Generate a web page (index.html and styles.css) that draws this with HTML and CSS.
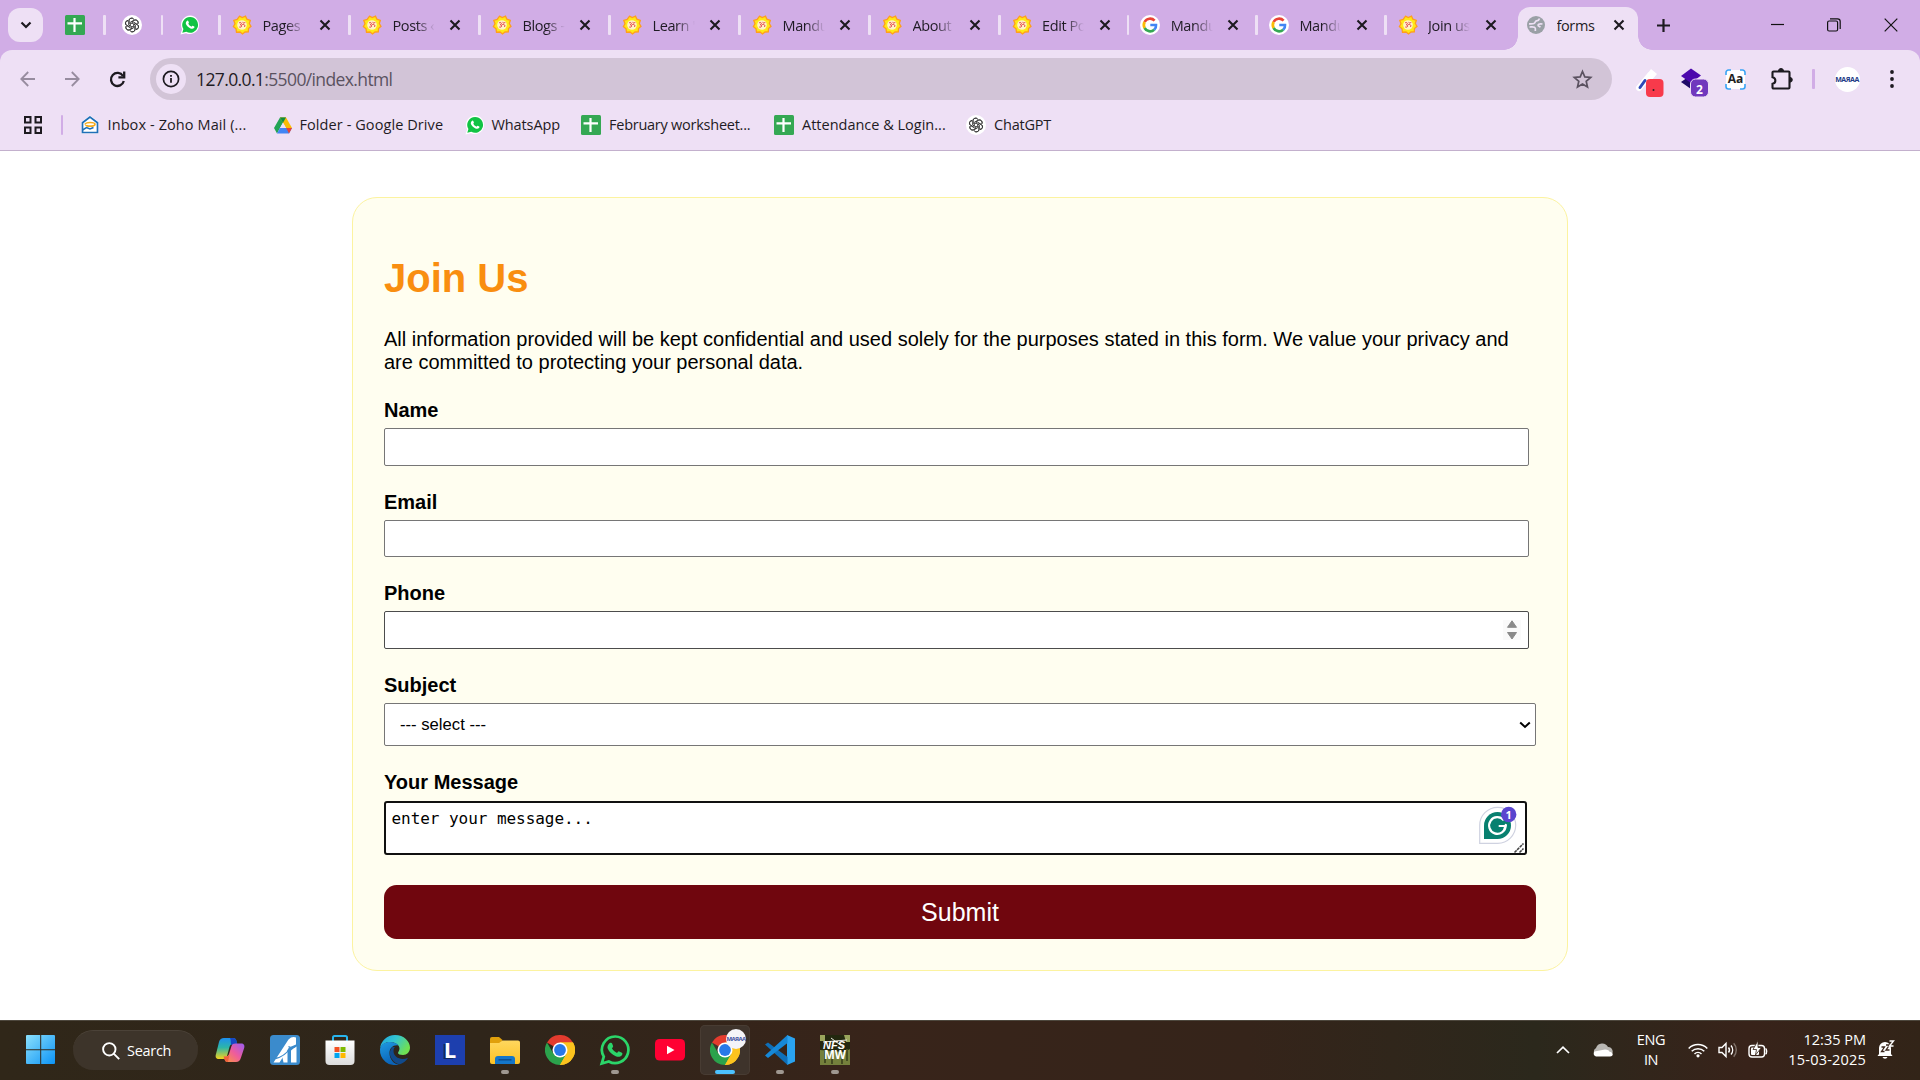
FILE: index.html
```html
<!DOCTYPE html>
<html lang="en">
<head>
<meta charset="utf-8">
<title>forms</title>
<link rel="stylesheet" href="styles.css">
</head>
<body>
<svg class="defs" width="0" height="0">
  <defs>
    <linearGradient id="edge-a" x1="0" y1="0" x2="1" y2="0.5"><stop offset="0" stop-color="#1ba4e0"/><stop offset=".5" stop-color="#34c5d0"/><stop offset="1" stop-color="#6fe052"/></linearGradient>
    <linearGradient id="edge-b" x1="0" y1="0" x2="0.4" y2="1"><stop offset="0" stop-color="#1f9be2"/><stop offset="1" stop-color="#0a63b8"/></linearGradient>
    <linearGradient id="win" x1="0" y1="0" x2="1" y2="1"><stop offset="0" stop-color="#8be0fc"/><stop offset="1" stop-color="#0c93f5"/></linearGradient>
    <linearGradient id="cop-a" x1="0" y1="0" x2="0" y2="1"><stop offset="0" stop-color="#1d8ff0"/><stop offset=".45" stop-color="#2cb6a8"/><stop offset="1" stop-color="#f5d21b"/></linearGradient>
    <linearGradient id="cop-b" x1="1" y1="0" x2="0" y2="1"><stop offset="0" stop-color="#9a5cf4"/><stop offset=".5" stop-color="#ee5c9c"/><stop offset="1" stop-color="#fb9a3c"/></linearGradient>
    <linearGradient id="fold" x1="0" y1="0" x2="0" y2="1"><stop offset="0" stop-color="#ffd75e"/><stop offset="1" stop-color="#fcc226"/></linearGradient>
    <linearGradient id="bag" x1="0" y1="0" x2="0" y2="1"><stop offset="0" stop-color="#ffffff"/><stop offset="1" stop-color="#dcdcdc"/></linearGradient>
    <symbol id="sheet" viewBox="0 0 20 20"><rect width="20" height="20" rx="1.5" fill="#34a853"/><path d="M9.500 3v14M2.500 8.300h14.500" stroke="#fff" stroke-width="2.200"/></symbol>
    <symbol id="gpt" viewBox="0 0 20 20"><circle cx="10" cy="10" r="10" fill="#fff"/><g fill="none" stroke="#333" stroke-width=".85"><path id="gp" d="M7.200 9V5.600a2.600 2.600 0 0 1 4.900-1.200M8.300 11V7.200l3.800-2.100a2.600 2.600 0 0 1 3.500 3.600"/><use href="#gp" transform="rotate(60 10 10)"/><use href="#gp" transform="rotate(120 10 10)"/><use href="#gp" transform="rotate(180 10 10)"/><use href="#gp" transform="rotate(240 10 10)"/><use href="#gp" transform="rotate(300 10 10)"/></g></symbol>
    <symbol id="wa" viewBox="0 0 20 20"><path d="M10.200.6a9.200 9.200 0 0 0-8.100 13.600L.5 19.600l5.600-1.400A9.200 9.200 0 1 0 10.200.6z" fill="#fff"/><path d="M10.200 2a7.900 7.900 0 0 0-6.800 12L2.300 17.800l4-1A7.900 7.900 0 1 0 10.200 2z" fill="#11c344"/><path d="M7.300 5.700c.5-.3.900 0 1.100.5l.5 1.200c.1.400-.5.900-.7 1.200.7 1.500 1.800 2.500 3.300 3.100.4-.4.800-1.100 1.200-1l1.500.8c.5.300.2 1.200-.2 1.600-1 .9-2.300.8-3.500.3-2.200-.9-3.800-2.500-4.600-4.400-.4-1.300.4-2.800 1.400-3.300z" fill="#fff"/></symbol>
    <symbol id="sun" viewBox="0 0 20 20"><path d="M7.500 1.200L10.200 2.500 13.500 1.200 14.900 4.200 18.300 5.300 17.300 8.500 19 11.300 16.500 13.500 16.300 16.900 13 17 10.500 19 8 17 4.500 17.200 4 13.800 1.400 11.500 3 8.700 1.800 5.400 5.200 4.400z" fill="#ffe817" stroke="#ff9f1c" stroke-width="1.300"/><circle cx="10" cy="10" r="4.800" fill="#fff3c4"/><path d="M7 8c2-1.500 3.400.6 1.300 1.800 2.400.4 1.500 3-1 2.200M9.500 10.200c2-2 4.300 0 3 1.700M10.500 7.300c1 1 2 1 2.800-.2" fill="none" stroke="#e2364a" stroke-width="1"/></symbol>
    <symbol id="goog" viewBox="0 0 20 20"><circle cx="10" cy="10" r="10" fill="#fff"/><g fill="none" stroke-width="2.700"><path d="M14.600 5.600A6.200 6.200 0 0 0 4.600 7" stroke="#ea4335"/><path d="M4.600 7a6.300 6.300 0 0 0 0 6" stroke="#fbbc05"/><path d="M4.600 13a6.200 6.200 0 0 0 9.600 1.700" stroke="#34a853"/><path d="M14.200 14.700c1.300-1.200 2-2.900 1.800-4.700h-5.700" stroke="#4285f4"/></g></symbol>
    <symbol id="x" viewBox="0 0 12 12"><path d="M1.500 1.500l9 9M10.500 1.500l-9 9" stroke="#1d1a20" stroke-width="2.100" fill="none"/></symbol>
    <symbol id="chrome" viewBox="0 0 30 30"><path d="M15 15L2 7.500a15 15 0 0 1 26 0z" fill="#e33b2e"/><path d="M15 7.500h13A15 15 0 0 1 15 30z" fill="#fcc31e"/><path d="M2 7.500A15 15 0 0 0 15 30l6.500-11.200L15 15l-6.500 3.700z" fill="#2ba24c"/><path d="M15 30l6.500-11.200a7.500 7.500 0 0 0 0-7.600L15 7.500h13A15 15 0 0 1 15 30z" fill="#fcc31e"/><circle cx="15" cy="15" r="7.500" fill="#fff"/><circle cx="15" cy="15" r="5.900" fill="#2878e8"/></symbol>
  </defs>
</svg>

<header class="browser">
  <div class="tabstrip">
    <button class="tab-search"><svg width="12" height="8" viewBox="0 0 12 8"><path d="M1.500 1.500L6 6l4.500-4.500" fill="none" stroke="#1d1a20" stroke-width="2.200"/></svg></button>
    <div class="pinned first"><svg class="fav"><use href="#sheet"/></svg><i class="sep"></i></div>
    <div class="pinned"><svg class="fav"><use href="#gpt"/></svg><i class="sep"></i></div>
    <div class="pinned"><svg class="fav"><use href="#wa"/></svg><i class="sep"></i></div>
    <div class="tab"><svg class="fav"><use href="#sun"/></svg><span class="label">Pages</span><svg class="close"><use href="#x"/></svg><i class="sep"></i></div>
    <div class="tab"><svg class="fav"><use href="#sun"/></svg><span class="label">Posts ‹</span><svg class="close"><use href="#x"/></svg><i class="sep"></i></div>
    <div class="tab"><svg class="fav"><use href="#sun"/></svg><span class="label">Blogs -</span><svg class="close"><use href="#x"/></svg><i class="sep"></i></div>
    <div class="tab"><svg class="fav"><use href="#sun"/></svg><span class="label">Learn '</span><svg class="close"><use href="#x"/></svg><i class="sep"></i></div>
    <div class="tab"><svg class="fav"><use href="#sun"/></svg><span class="label">Mandu</span><svg class="close"><use href="#x"/></svg><i class="sep"></i></div>
    <div class="tab"><svg class="fav"><use href="#sun"/></svg><span class="label">About</span><svg class="close"><use href="#x"/></svg><i class="sep"></i></div>
    <div class="tab narrow"><svg class="fav"><use href="#sun"/></svg><span class="label">Edit Po</span><svg class="close"><use href="#x"/></svg><i class="sep"></i></div>
    <div class="tab narrow"><svg class="fav"><use href="#goog"/></svg><span class="label">Mandu</span><svg class="close"><use href="#x"/></svg><i class="sep"></i></div>
    <div class="tab narrow"><svg class="fav"><use href="#goog"/></svg><span class="label">Mandu</span><svg class="close"><use href="#x"/></svg><i class="sep"></i></div>
    <div class="tab last"><svg class="fav"><use href="#sun"/></svg><span class="label">Join us</span><svg class="close"><use href="#x"/></svg></div>
    <div class="tab active"><svg class="fav" viewBox="0 0 20 20"><circle cx="10" cy="10" r="9" fill="#9aa0a6"/><path d="M13.500 3.500c-.5 2-1.500 2.200-3 2.300-1.700.2-.8 2.200-2.500 2.700-1.500.5-3 .5-5 .3M3.500 12c2 0 3-.5 5 .3 1.500.7 1 2 .8 3.700M16.500 9c-2-.3-4-.5-4.500 1-.3 1.300 1.500 1.500 2.500 2" fill="none" stroke="#eee0f5" stroke-width="1.700"/></svg><span class="label whole">forms</span><svg class="close"><use href="#x"/></svg></div>
    <svg class="newtab" width="13" height="13"><path d="M6.500 0v13M0 6.500h13" stroke="#1d1a20" stroke-width="2.200"/></svg>
    <div class="window-buttons">
      <svg width="13" height="14"><path d="M0 6.500h13" stroke="#111" stroke-width="1.200"/></svg>
      <svg width="14" height="14" viewBox="0 0 14 14" fill="none" stroke="#111" stroke-width="1.200"><rect x=".6" y="3" width="10" height="10" rx="1.500"/><path d="M3 .8h7.500a2.700 2.700 0 0 1 2.700 2.700v7.500"/></svg>
      <svg width="14" height="14" viewBox="0 0 14 14"><path d="M.7.7l12.600 12.600M13.300.7L.7 13.300" stroke="#111" stroke-width="1.200"/></svg>
    </div>
  </div>

  <div class="toolbar">
    <div class="nav">
      <svg class="faded" width="15" height="16" viewBox="0 0 15 16"><path d="M15 8H1.500M8.200 1L1.300 8l6.900 7"/></svg>
      <svg class="faded" width="15" height="16" viewBox="0 0 15 16"><path d="M0 8h13.500M6.800 1l6.900 7-6.900 7"/></svg>
      <svg class="reload" width="16" height="16" viewBox="0 0 16 16"><path d="M13 5A6.500 6.500 0 1 0 13.800 10"/><path d="M14.200.5v5.800H8.400"/></svg>
    </div>
    <div class="omnibox">
      <span class="info"><svg width="18" height="18" viewBox="0 0 18 18" fill="none" stroke="#1d1a20"><circle cx="9" cy="9" r="7.600" stroke-width="1.700"/><path d="M9 8v4.700M9 4.900v1.800" stroke-width="1.800"/></svg></span>
      <span class="url"><span class="host">127.0.0.1</span>:5500/index.html</span>
      <svg class="star" width="19" height="19" viewBox="0 0 19 19"><path d="M9.500 1.500l2.300 5.400 5.900.5-4.500 3.900 1.300 5.700-5-3-5 3 1.300-5.700L1.300 7.400l5.900-.5z" fill="none" stroke="#5b5260" stroke-width="1.700"/></svg>
    </div>
    <div class="extensions">
      <svg width="28" height="30" viewBox="0 0 28 30"><path d="M2 18L13 5" stroke="#fff" stroke-width="6" stroke-linecap="round"/><path d="M3 17.500l5-7" stroke="#2f49b8" stroke-width="3" stroke-linecap="round"/><path d="M14-1l6 5-6 7-5-5z" fill="#fff"/><rect x="9" y="9" width="17.500" height="18" rx="4" fill="#f83a4b"/><circle cx="16.500" cy="20" r="1" fill="#222"/></svg>
      <svg width="28" height="30" viewBox="0 0 28 30"><path d="M10 5l9 7-9 7-10-7z" fill="#1e0a68"/><path d="M10-1.500l10 7-10 7.500L0 6z" fill="#4c08ad"/><rect x="9.500" y="9" width="18" height="18" rx="5" fill="#7038bd" stroke="#eee0f5"/><text x="18.500" y="23.500" text-anchor="middle" class="count">2</text></svg>
      <svg width="21" height="21" viewBox="0 0 21 21"><rect x="1" y="1" width="19" height="19" rx="3" fill="#fff"/><path d="M1 6V3.500A2.500 2.500 0 0 1 3.500 1H6M15 1h2.500A2.500 2.500 0 0 1 20 3.500V6M20 15v2.500a2.500 2.500 0 0 1-2.500 2.500H15M6 20H3.500A2.500 2.500 0 0 1 1 17.500V15" fill="none" stroke="#38a3f5" stroke-width="1.600"/><text x="10.500" y="14.200" text-anchor="middle" class="aa">Aa</text></svg>
      <svg width="22" height="22" viewBox="0 0 22 22"><path d="M2.500 3.500h15a1 1 0 0 1 1 1v15a1 1 0 0 1-1 1h-15a1 1 0 0 1-1-1v-3.700c3.800-.6 3.800-6 0-6.600V4.500a1 1 0 0 1 1-1z" fill="none" stroke="#1d1a20" stroke-width="2.100"/><path d="M7.500 3a2.500 2.500 0 0 1 5 0zM19 9.500a2.300 2.300 0 0 1 0 4.600z" fill="#1d1a20" stroke="#1d1a20"/></svg>
      <i class="divider"></i>
      <span class="avatar">MAЯAA</span>
      <svg class="menu" width="4" height="18" viewBox="0 0 4 18"><circle cx="2" cy="2" r="1.900"/><circle cx="2" cy="9" r="1.900"/><circle cx="2" cy="16" r="1.900"/></svg>
    </div>
  </div>

  <nav class="bookmarks">
    <svg class="apps" width="18" height="18" viewBox="0 0 18 18" fill="none" stroke="#1d1a20" stroke-width="2"><rect x="1" y="1" width="5.500" height="5.500"/><rect x="11.500" y="1" width="5.500" height="5.500"/><rect x="1" y="11.500" width="5.500" height="5.500"/><rect x="11.500" y="11.500" width="5.500" height="5.500"/></svg>
    <i class="divider"></i>
    <a class="bm zoho"><svg width="18" height="20" viewBox="0 0 18 20"><path d="M9 .5L.5 7v11.500h17V7z" fill="#fff"/><path d="M9 2L1.500 7.700v9.800h15V7.700z" fill="#fff" stroke="#1f70b8" stroke-width="1.700"/><path d="M1.500 15l4-2.500 3.500 1.500 3.500-1.500" fill="none" stroke="#1f70b8" stroke-width="1.500"/><path d="M4 9.500c.5-1.500 3-2 5-2s5 .5 5 1.800c0 1.500-3 2-5 1.900-2 0-4-.3-4-1.200" fill="none" stroke="#f5ab1c" stroke-width="1.700"/></svg><span>Inbox - Zoho Mail (...</span></a>
    <a class="bm drive"><svg width="18" height="17" viewBox="0 0 18 17"><path d="M6 .5h6L6 11 3 16.500 0 11z" fill="#22a455"/><path d="M6 .5h6L18 11h-6z" fill="#fbbc04"/><path d="M6 11h12l-3 5.500H3z" fill="#4285f4"/><path d="M12.200 11H18l-3 5.500z" fill="#ea4335"/><path d="M9 5.600L12 11H6z" fill="#eee0f5"/><path d="M6 .5h6L9 5.700z" fill="#118a42"/></svg><span>Folder - Google Drive</span></a>
    <a class="bm whats"><svg class="fav"><use href="#wa"/></svg><span>WhatsApp</span></a>
    <a class="bm feb"><svg class="fav"><use href="#sheet"/></svg><span>February worksheet...</span></a>
    <a class="bm att"><svg class="fav"><use href="#sheet"/></svg><span>Attendance &amp; Login...</span></a>
    <a class="bm chat"><svg class="fav"><use href="#gpt"/></svg><span>ChatGPT</span></a>
  </nav>
</header>

<main class="page">
  <form class="card">
    <h1>Join Us</h1>
    <p class="intro">All information provided will be kept confidential and used solely for the purposes stated in this form. We value your privacy and are committed to protecting your personal data.</p>
    <div class="field"><label>Name</label><div class="box"></div></div>
    <div class="field"><label>Email</label><div class="box"></div></div>
    <div class="field"><label>Phone</label><div class="box number"><svg width="18" height="20" viewBox="0 0 18 20"><rect width="18" height="20" fill="#fafafa"/><path d="M9 .8L13.500 7.300H4.500zM9 19L4.500 12.500h9z" fill="#8a8a8a" stroke="#8a8a8a" stroke-linejoin="round"/></svg></div></div>
    <div class="field subject"><label>Subject</label><div class="box select"><span>--- select ---</span><svg width="12" height="8" viewBox="0 0 12 8"><path d="M1.200 1.500L6 6l4.800-4.500" fill="none" stroke="#000" stroke-width="2"/></svg></div></div>
    <div class="field message"><label>Your Message</label>
      <div class="box textarea"><span>enter your message...</span>
        <svg class="grammarly" width="38" height="38" viewBox="0 0 38 38"><path d="M.7 36.300V18.500A18 18 0 1 1 18.500 36.300z" fill="#fff" stroke="#cfd2e0" stroke-width="1.200"/><path d="M5 32V18.500A13.500 13.500 0 1 1 18.500 32z" fill="#08806f"/><path d="M24.800 13.200A8.300 8.300 0 1 0 26.700 19h-7" fill="none" stroke="#fff" stroke-width="2.200"/><path d="M27 17l-2 6" stroke="#fff" stroke-width="2"/><circle cx="29.700" cy="7.500" r="7.700" fill="#5a45cf"/><text x="29.700" y="11.500" text-anchor="middle" class="one">1</text></svg>
        <svg class="grip" width="10" height="10"><path d="M.5 9.500l9-9M5.500 9.500l4-4" stroke="#444" stroke-width="1.500" stroke-dasharray="3 .7"/></svg>
      </div>
    </div>
    <button class="submit" type="button">Submit</button>
  </form>
</main>

<footer class="taskbar">
  <div class="apps-row">
    <svg class="start" width="30" height="30" viewBox="0 0 30 30"><path d="M0 1a1 1 0 0 1 1-1h13.200v14.200H0zM15.200 0H28a1 1 0 0 1 1 1v13.200H15.200zM0 15.200h14.200V29H1a1 1 0 0 1-1-1zM15.200 15.200H29V28a1 1 0 0 1-1 1H15.200z" fill="url(#win)"/></svg>
    <div class="search"><svg width="18" height="18" viewBox="0 0 18 18" fill="none" stroke="#fff" stroke-width="1.900"><circle cx="7.300" cy="7.300" r="6.200"/><path d="M11.700 11.700l5.500 5.500"/></svg><span>Search</span></div>
    <div class="app"><svg width="30" height="30" viewBox="0 0 30 30"><path d="M9 3h9c2 0 3 1 3.500 3L22 9h-4c-2 0-3 1-3.500 3l-2.500 9c-.5 2-2 3-4 3H4c-3 0-4-2-3-5L4 7c.7-2.500 2.500-4 5-4z" fill="url(#cop-a)"/><path d="M15 3h3c2 0 3 1 3.500 3l1 4h-6c-1.500-2 0-5-1.500-7z" fill="#1647c4"/><path d="M21 27h-8c-2.500 0-3-1-3.500-3L9 21.500h2c1.500 0 2.500-1 3-2.500l2.500-8c.5-1.700 2-2.500 4-2.500H26c3 0 4 2 3 5l-3 9c-.8 3-2.500 4.500-5 4.500z" fill="url(#cop-b)"/><path d="M8.500 21.500h3c1.500 0 2.500-1 3-2.500l-1.500 8c-2.500 0-3-1-3.500-3z" fill="#f0603c"/></svg></div>
    <div class="app"><svg width="30" height="30" viewBox="0 0 30 30"><rect width="30" height="30" rx="3.500" fill="#3b8bcc"/><path d="M3.500 27.500L18.500 4.500Q22 1 26 2.500V9.500L19 12.500 9.500 27.500z" fill="#fff"/><path d="M11.500 18.500l6-3V27.500h-4z" fill="#fff"/><path d="M21 15.500l5.500-4.500V27.500H21z" fill="#fff"/><path d="M5.500 23.500q9-2 14.500-10M18.500 11.500q4 3 8.500-1" fill="none" stroke="#3b8bcc" stroke-width="1.300"/></svg></div>
    <div class="app"><svg width="30" height="30" viewBox="0 0 30 30"><path d="M8 6V2.500A1.500 1.500 0 0 1 9.500 1h11A1.500 1.500 0 0 1 22 2.500V6" fill="none" stroke="#28b5ee" stroke-width="2"/><path d="M.5 5.500h29V26a4 4 0 0 1-4 4h-21a4 4 0 0 1-4-4z" fill="url(#bag)"/><path d="M9.500 12h5v5h-5z" fill="#f25022"/><path d="M15.500 12h5v5h-5z" fill="#7fba00"/><path d="M9.500 18h5v5h-5z" fill="#00a4ef"/><path d="M15.500 18h5v5h-5z" fill="#ffb900"/></svg></div>
    <div class="app"><svg width="30" height="30" viewBox="0 0 30 30"><path d="M0 14A15 15 0 0 1 15 0c9 0 15 6.500 15 12.500 0 4.500-3 7.500-7 7.500-3 0-5-1-5-2s1.500-2 1.500-4.500c0-3.500-4-6.500-9.500-6.500C5 7 1 10 0 14z" fill="url(#edge-a)"/><path d="M0 14c1-4.500 5-7 10-7 4 0 7 1.500 8.500 3.500-5-1-9 2.500-9 7.500 0 6.500 5 12 10 11.400A15 15 0 0 1 0 14z" fill="url(#edge-b)"/><path d="M12.500 12c-3 3-3.500 7.500-1 11.500 2.500 4 6 6 8.500 5.700 4-1.200 6.500-3.700 8-6.500-7 3.500-14.500-.7-14.500-6.700 0-1.500.5-3 1.500-4z" fill="#114a8b"/></svg></div>
    <div class="app"><span class="l-app">L</span></div>
    <div class="app"><svg width="30" height="30" viewBox="0 0 30 30"><path d="M0 4a2 2 0 0 1 2-2h7l3.500 3L11 8H0z" fill="#e0a00c"/><path d="M0 8h9l3.500-2.500H28a2 2 0 0 1 2 2V27a2 2 0 0 1-2 2H2a2 2 0 0 1-2-2z" fill="url(#fold)"/><path d="M5 24a3 3 0 0 1 3-3h14a3 3 0 0 1 3 3v5H5z" fill="#1476c9"/><path d="M8.500 24.800h13" stroke="#0b4f91" stroke-width="1.500"/></svg><i class="dot"></i></div>
    <div class="app"><svg width="30" height="30"><use href="#chrome"/></svg></div>
    <div class="app"><svg width="30" height="30" viewBox="0 0 30 30"><path d="M15.300 1.500A13.300 13.300 0 0 0 3.800 21.600L1.700 28.500l7.100-2A13.300 13.300 0 1 0 15.300 1.500z" fill="none" stroke="#2bd569" stroke-width="2.700"/><path d="M10.500 7.800c.8-.2 1.300.1 1.600.8l1 2.400c.2.700-.4 1.400-1.200 2.300 1.200 2.200 2.900 3.700 5.200 4.700.7-.8 1.200-1.900 2.100-1.600l2.700 1.300c.9.500.5 2-.2 2.800-1.700 1.700-3.800 1.500-6 .7-3.700-1.500-6.600-4.200-8-7.600-.7-2.300.9-5.200 2.800-5.800z" fill="#2bd569"/></svg><i class="dot"></i></div>
    <div class="app"><svg width="30" height="30" viewBox="0 0 30 30"><rect y="4" width="30" height="21.500" rx="4.500" fill="#ff0033"/><path d="M12 10.700l7.500 4.300-7.500 4.300z" fill="#fff"/></svg></div>
    <div class="app current"><svg width="30" height="30"><use href="#chrome"/></svg><span class="badge">MAЯAA</span><i class="dot"></i></div>
    <div class="app"><svg width="30" height="30" viewBox="0 0 30 30"><path d="M22 0L30 3.500v23L22 30z" fill="#2aa3f0"/><path d="M0 9.500L3 7.500 22.500 22v8z" fill="#0f6fb8"/><path d="M0 20.500l3 2.500L22.500 8V0z" fill="#1688d8"/></svg><i class="dot"></i></div>
    <div class="app"><svg width="30" height="30" viewBox="0 0 30 30"><rect width="30" height="30" fill="#74803c"/><path d="M0 0h30v14L24 17 0 15z" fill="#23280f"/><path d="M24 0h6v7h-4zM0 0h5v6H0z" fill="#9aa55c"/><path d="M5 16v12M12 24v5M22 23v6M27 14v12" stroke="#454d22" stroke-width="2"/><path d="M3 7l24-2M11 3l12 9" stroke="#e8e8e0" stroke-width="1"/><text x="14" y="13.500" text-anchor="middle" class="nfs">NFS</text><text x="15" y="24" text-anchor="middle" class="mw">MW</text></svg><i class="dot"></i></div>
  </div>
  <div class="tray">
    <svg class="caret" width="14" height="8" viewBox="0 0 14 8"><path d="M1 7l6-5.800L13 7" fill="none" stroke="#fff" stroke-width="1.700"/></svg>
    <svg class="cloud" width="20" height="14" viewBox="0 0 20 14"><path d="M4 12.500A4 4 0 0 1 3 5 6.500 6.500 0 0 1 15 4a4.500 4.500 0 0 1 3 8z" fill="#b9b7b3"/><path d="M3 13.500a3 3 0 0 1-1.500-5L12 6.500c3 0 4 1 4.500 2.200 4 .3 4.500 4.800.5 4.800z" fill="#fff"/></svg>
    <div class="lang"><span>ENG</span><span>IN</span></div>
    <svg class="wifi" width="20" height="16" viewBox="0 0 20 16" fill="none" stroke="#fff" stroke-width="1.500"><path d="M.7 6.500a13 13 0 0 1 18.600 0M3.700 9.300a9 9 0 0 1 12.600 0M6.500 12a5 5 0 0 1 7 0"/><circle cx="10" cy="13.800" r="1.600" fill="#fff" stroke="none"/></svg>
    <svg class="vol" width="20" height="16" viewBox="0 0 20 16" fill="none" stroke="#fff" stroke-width="1.400"><path d="M1 5.500h3L8 1.500v13l-4-4H1z"/><path d="M10.500 5.500a4 4 0 0 1 0 5M13 3.500a7 7 0 0 1 0 9"/><path d="M15.700 1.300a10 10 0 0 1 0 13.400" stroke="#80736b"/></svg>
    <svg class="batt" width="20" height="18" viewBox="0 0 20 18"><rect x="1" y="4.500" width="15.500" height="11.500" rx="3" fill="none" stroke="#fff" stroke-width="1.400"/><path d="M17.500 7.500c1.500.5 1.500 5 0 5.500" stroke="#fff" stroke-width="1.500" fill="none"/><rect x="3" y="6.500" width="8" height="7.500" rx="1" fill="#fff"/><path d="M10-.5L5 8.500h3.500L7.500 14l6-7.500H10z" fill="#fff" stroke="#38241a" stroke-width=".8"/></svg>
    <div class="clock"><span class="time">12:35 PM</span><span class="date">15-03-2025</span></div>
    <svg class="bell" width="18" height="20" viewBox="0 0 18 20"><path d="M2 14V8a6 6 0 0 1 12 0v6l1.500 2H.5z" fill="#fff"/><path d="M5.500 17a2.700 2.700 0 0 0 5 0z" fill="#fff"/><path d="M4.500 7h3l-3 4.500h3M9 5h3.500L9 10h3.500" fill="none" stroke="#38241a" stroke-width="1.300"/><path d="M12.500 1h4l-4 5h4" fill="none" stroke="#fff" stroke-width="1.400"/></svg>
  </div>
</footer>
</body>
</html>
```
FILE: styles.css
```css
* { box-sizing: border-box; }
body {
  margin: 0;
  width: 1920px;
  height: 1080px;
  overflow: hidden;
  display: flex;
  flex-direction: column;
  background: #fff;
  font-family: "Liberation Sans", Arial, sans-serif;
}
.defs { position: absolute; }
svg { display: block; flex: none; overflow: visible; }

/* browser chrome */
.browser {
  height: 151px;
  background: #d1ade6;
  font-family: "Open Sans", "Noto Sans", sans-serif;
  color: #1f1b24;
}
.tabstrip { height: 50px; display: flex; align-items: center; }
.tab-search {
  width: 35px; height: 34px; margin: 0 4px 0 8px; padding: 0;
  border: 0; border-radius: 12px; background: #eee0f5;
  display: flex; align-items: center; justify-content: center;
}
.fav { width: 20px; height: 20px; }
.sep { width: 2.5px; height: 20px; border-radius: 1px; background: #eee0f5; margin-left: auto; flex: none; }
.pinned { width: 57.5px; padding-left: 16.500px; display: flex; align-items: center; }
.pinned.first { width: 58.5px; padding-left: 18px; }
.tab { width: 130px; padding-left: 11.5px; display: flex; align-items: center; flex: none; }
.tab.narrow { width: 128.7px; padding-left: 11px; }
.tab.last { width: 131px; padding-left: 11px; }
.label {
  width: 42px; margin-left: 10.500px; padding-top: 2px; overflow: hidden; white-space: nowrap;
  font-size: 14.500px; line-height: 22px; letter-spacing: -0.4px;
  -webkit-mask-image: linear-gradient(90deg, #000 55%, transparent 100%);
  mask-image: linear-gradient(90deg, #000 55%, transparent 100%);
}
.label.whole { -webkit-mask-image: none; mask-image: none; }
.close { width: 12px; height: 12px; margin-left: 14.500px; }
.tab.active {
  position: relative; width: 120px; height: 43px; align-self: flex-end;
  padding: 0 0 7px 8.500px; border-radius: 12px 12px 0 0; background: #eee0f5;
}
.tab.active::before, .tab.active::after {
  content: ""; position: absolute; bottom: 0; width: 14px; height: 14px;
}
.tab.active::before { left: -14px; background: radial-gradient(circle at 0 0, transparent 13.5px, #eee0f5 14px); }
.tab.active::after { right: -14px; background: radial-gradient(circle at 100% 0, transparent 13.5px, #eee0f5 14px); }
.newtab { margin-left: 19px; }
.window-buttons { display: flex; align-items: center; gap: 43px; margin: 0 22px 0 auto; }

.toolbar {
  height: 58px; display: flex; align-items: center;
  padding-left: 20px; border-radius: 12px 12px 0 0; background: #eee0f5;
}
.nav { display: flex; align-items: center; gap: 30px; width: 130px; fill: none; stroke: #1d1a20; stroke-width: 2; }
.nav .faded { stroke: #978c9f; stroke-width: 1.8; }
.nav .reload { stroke-width: 2.3; }
.omnibox {
  width: 1462px; height: 42px; padding: 0 20px 0 6px; border-radius: 21px;
  background: #d2c4d7; display: flex; align-items: center;
}
.info {
  width: 30px; height: 30px; border-radius: 50%; background: #eee0f5;
  display: flex; align-items: center; justify-content: center;
}
.url { margin-left: 10px; font-size: 17.5px; letter-spacing: -0.62px; color: #5a525f; white-space: nowrap; }
.host { color: #1f1b24; }
.star { margin-left: auto; }
.extensions { display: flex; align-items: center; flex: 1; padding-left: 25px; }
.extensions > svg { margin-right: 16px; }
.extensions > svg:nth-child(1), .extensions > svg:nth-child(2) { margin-top: 12px; }
.extensions > svg:nth-child(3) { margin-right: 25px; }
.extensions > svg:nth-child(4) { margin-right: 19px; }
.count { font: bold 12px "Open Sans", sans-serif; fill: #fff; }
.aa { font: bold 12px "Open Sans", sans-serif; fill: #222; }
.divider { width: 2.5px; height: 20px; border-radius: 1px; background: #d1ade6; flex: none; }
.avatar {
  width: 25px; height: 25px; margin-left: 20px; border-radius: 50%; background: #fff;
  display: flex; align-items: center; justify-content: center;
  font: bold 7px "Open Sans", sans-serif; letter-spacing: -0.4px; color: #233a86;
}
.extensions > .menu { margin: 0 0 0 30.5px; fill: #1d1a20; }

.bookmarks {
  height: 43px; padding: 0 0 8px 23.500px; display: flex; align-items: center;
  background: #eee0f5; border-bottom: 1px solid #c3b0cd;
}
.bookmarks .divider { margin: 0 18px 0 19px; }
.bm { display: flex; align-items: center; font-size: 14.5px; white-space: nowrap; }
.bm span { margin: -2px 0 0 8px; }
.zoho { width: 192.5px; letter-spacing: 0.1px; }
.zoho span { margin-left: 8.500px; }
.drive { width: 191.500px; letter-spacing: 0.08px; }
.whats { width: 116px; letter-spacing: -0.1px; }
.whats span { margin-left: 6.500px; }
.feb { width: 193px; letter-spacing: -0.25px; }
.att { width: 192px; }
.att span { letter-spacing: 0; }
.chat { letter-spacing: -0.2px; }

/* form page */
.page { height: 869px; padding-top: 46px; }
.card {
  width: 1216px; height: 774px; margin: 0 auto; padding: 57px 31px 0;
  border: 1px solid #fcf3a0; border-radius: 25px; background: #fffef0; color: #000;
}
h1 { margin: 0; font-size: 40px; line-height: 46px; color: #f98e10; }
.intro { margin: 26.5px 0 0; font-size: 20px; line-height: 23px; }
.field { margin-top: 25px; }
label { display: block; font-size: 20px; font-weight: bold; line-height: 23px; margin-bottom: 6px; }
.box {
  width: 1145px; height: 37.7px; background: #fff; border: 1px solid #767676; border-radius: 2px;
  display: flex; align-items: center;
}
.intro + .field { margin-top: 25.5px; }
.number { border-color: #4c4c4c; justify-content: flex-end; padding-right: 7.5px; }
.select { width: 100%; height: 43px; padding: 0 4.5px 0 15px; justify-content: space-between; font-size: 16.67px; }
.message label { margin-bottom: 7px; }
.textarea {
  position: relative; width: 1143px; height: 54px; padding: 6px 5.5px 0; align-items: flex-start;
  border: 2px solid #101010; border-radius: 3px;
  font: 16px "DejaVu Sans Mono", monospace; letter-spacing: -0.05px;
}
.grammarly { position: absolute; right: 8px; top: 4px; }
.grip { position: absolute; right: 1px; bottom: 0; }
.one { font: bold 11px "Open Sans", sans-serif; fill: #fff; }
.submit {
  display: block; width: 100%; height: 54px; margin-top: 30px; padding: 0; border: 0; border-radius: 12.5px;
  background: #70060e; color: #fff; font: 25px "Liberation Sans", Arial, sans-serif;
}

/* taskbar */
.taskbar {
  height: 60px; display: flex; align-items: center; justify-content: space-between;
  color: #fff; box-shadow: inset 0 1px 0 #4d473d;
  background: linear-gradient(90deg, #302719 0%, #2f251a 25%, #38241a 46%, #35241a 65%, #2b281c 80%, #38231a 91%, #322418 100%);
  font: 14.5px "Open Sans", "Noto Sans", sans-serif;
}
.apps-row { display: flex; align-items: center; padding-left: 26px; }
.start { margin-right: 17px; }
.search {
  width: 125px; height: 40px; margin-right: 7px; padding-left: 29px; border-radius: 20px;
  background: #3d342a; border-top: 1px solid #4b4238; display: flex; align-items: center;
  letter-spacing: -0.3px;
}
.search span { margin: -1px 0 0 7px; }
.app {
  position: relative; width: 50px; height: 50px; margin-right: 5px; border-radius: 5px;
  display: flex; align-items: center; justify-content: center;
}
.current { background: #3e332b; box-shadow: inset 0 0 0 1px #483c33; }
.dot { position: absolute; left: 21px; bottom: 1px; width: 8px; height: 4px; border-radius: 2px; background: #9f9891; }
.current .dot { left: 15px; width: 20px; background: #4cc2ff; }
.badge {
  position: absolute; left: 26px; top: 4px; width: 20px; height: 20px; border-radius: 50%; background: #f4f4f8;
  display: flex; align-items: center; justify-content: center;
  font: bold 6px "Open Sans", sans-serif; letter-spacing: -0.6px; color: #3d4f9e;
}
.l-app {
  width: 30px; height: 30px; background: #1d3fae; text-align: center;
  font: bold 22px/29px "Open Sans", sans-serif; text-shadow: -2px 1px 0 #10285f;
}
.nfs { font: italic bold 11px "Liberation Sans", sans-serif; fill: #fff; }
.mw { font: bold 11.5px "Open Sans", sans-serif; fill: #fff; }
.tray { display: flex; align-items: center; padding-right: 25px; }
.cloud { margin-left: 23px; }
.lang, .clock { display: flex; flex-direction: column; line-height: 20px; letter-spacing: -0.4px; }
.lang { width: 40px; margin-left: 18px; align-items: center; }
.wifi { margin-left: 17px; }
.vol { margin-left: 10px; }
.batt { margin-left: 10px; }
.clock { width: 98px; align-items: flex-end; margin-top: -1px; white-space: nowrap; }
.time { letter-spacing: 0; }
.date { letter-spacing: 0.2px; }
.bell { margin-left: 11px; }
```
